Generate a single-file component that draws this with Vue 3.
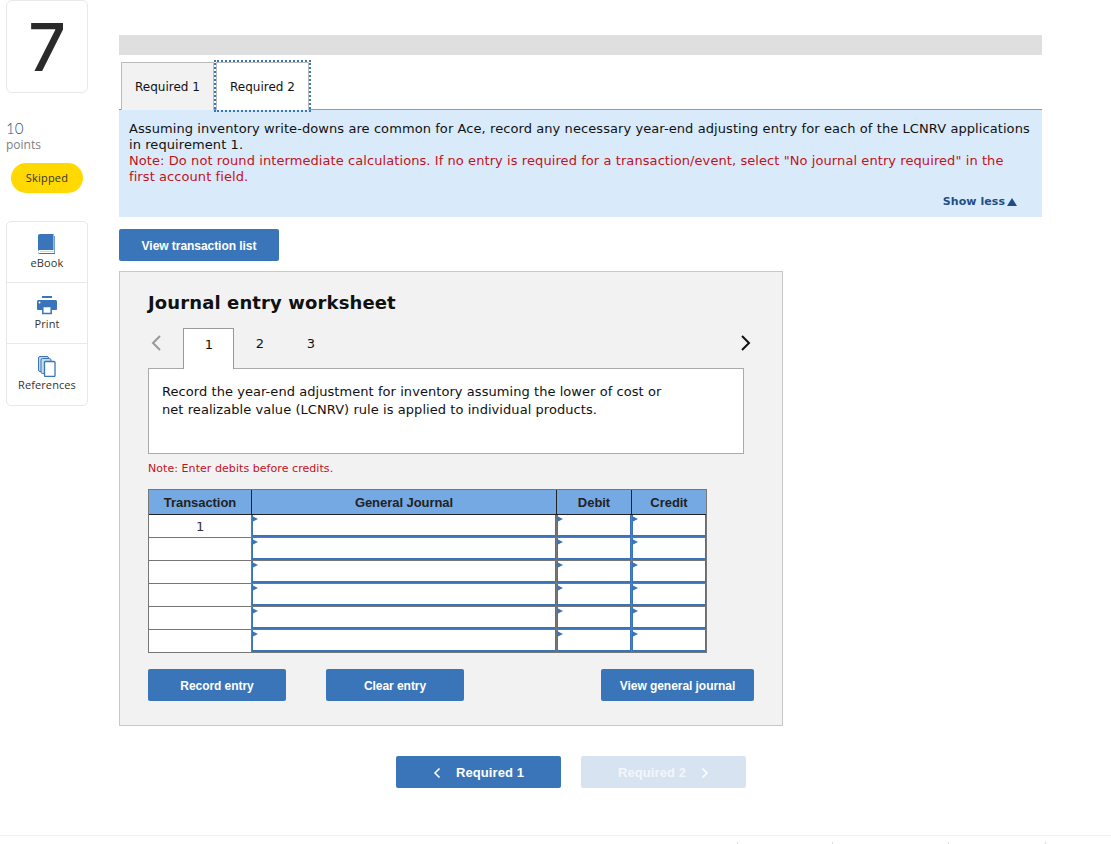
<script setup>
const tools = [
  { name: 'eBook', icon: 'book' },
  { name: 'Print', icon: 'print' },
  { name: 'References', icon: 'refs' }
]
const rows = [1, '', '', '', '', '']
const ticks = [737, 832, 948, 1045]
</script>

<template>
  <div class="page">
    <aside class="side">
      <div class="qnum">7</div>
      <div class="pts">10</div>
      <div class="pts-label">points</div>
      <div class="pill">Skipped</div>
      <div class="tools">
        <div v-for="t in tools" :key="t.name" class="tool">
          <svg class="tool-icon" width="24" height="24" viewBox="0 0 24 24">
            <template v-if="t.icon === 'book'">
              <path d="M3 5C3 3.800 3.800 3 5 3H18.500V19H5C3.800 19 3 19.700 3 20.500Z" fill="#3a75b9"/>
              <path d="M19.300 5H20V23H5C3.800 23 3 22 3 21C3.300 21.800 4 22 5 22H19.300Z" fill="#3a75b9"/>
              <path d="M5 20.500H18.500" stroke="#c6d8ec" stroke-width="1"/>
            </template>
            <template v-else-if="t.icon === 'print'">
              <rect x="7" y="4" width="10" height="2" fill="#3a75b9"/>
              <path d="M2 9.500C2 8.700 2.700 8 3.500 8H20.500C21.300 8 22 8.700 22 9.500V17C22 17.500 21.500 18 21 18H3C2.500 18 2 17.500 2 17Z" fill="#3a75b9"/>
              <rect x="7.800" y="14.500" width="8.400" height="7" fill="#fff" stroke="#3a75b9" stroke-width="1.500"/>
              <circle cx="4.500" cy="10.500" r="1" fill="#fff"/>
            </template>
            <template v-else>
              <rect x="3.500" y="3.500" width="10" height="15" rx="1.500" fill="#c6d8ec" stroke="#3a75b9"/>
              <rect x="6" y="5.500" width="10" height="15" rx="1.500" fill="#c6d8ec" stroke="#3a75b9"/>
              <rect x="9.500" y="8.500" width="10.500" height="15" rx="1" fill="#fff" stroke="#3a75b9" stroke-width="1.300"/>
            </template>
          </svg>
          <span>{{ t.name }}</span>
        </div>
      </div>
    </aside>

    <main class="main">
      <div class="graybar"></div>
      <div class="tabs">
        <div class="tab">Required 1</div>
        <div class="tab active">Required 2</div>
      </div>
      <div class="info">
        <p>Assuming inventory write-downs are common for Ace, record any necessary year-end adjusting entry for each of the LCNRV applications in requirement 1.</p>
        <p class="red">Note: Do not round intermediate calculations. If no entry is required for a transaction/event, select "No journal entry required" in the first account field.</p>
        <div class="show-less">Show less<span class="tri"></span></div>
      </div>
      <button class="btn list-btn">View transaction list</button>

      <section class="sheet">
        <h2>Journal entry worksheet</h2>
        <div class="steps">
          <svg class="chev" width="12" height="18" viewBox="0 0 12 18"><path d="M10 2L3 9L10 16" fill="none" stroke="#999" stroke-width="2"/></svg>
          <div class="step current">1</div>
          <div class="step">2</div>
          <div class="step">3</div>
          <svg class="chev next" width="12" height="18" viewBox="0 0 12 18"><path d="M2 2L9 9L2 16" fill="none" stroke="#111" stroke-width="2"/></svg>
        </div>
        <div class="prompt">Record the year-end adjustment for inventory assuming the lower of cost or net realizable value (LCNRV) rule is applied to individual products.</div>
        <div class="note">Note: Enter debits before credits.</div>

        <table class="journal">
          <thead>
            <tr>
              <th class="c-tr">Transaction</th>
              <th class="c-gj">General Journal</th>
              <th class="c-dr">Debit</th>
              <th class="c-cr">Credit</th>
            </tr>
          </thead>
          <tbody>
            <tr v-for="(r, i) in rows" :key="i">
              <td class="num">{{ r }}</td>
              <td class="cell"><i></i></td>
              <td class="cell"><i></i></td>
              <td class="cell"><i></i></td>
            </tr>
          </tbody>
        </table>

        <div class="actions">
          <button class="btn act">Record entry</button>
          <button class="btn act clear">Clear entry</button>
          <button class="btn act journal-btn">View general journal</button>
        </div>
      </section>

      <div class="nav">
        <button class="btn nav-btn">
          <svg width="8" height="12" viewBox="0 0 8 12"><path d="M6.500 1.500L2 6L6.500 10.500" fill="none" stroke="#fff" stroke-width="1.600"/></svg>
          Required 1
        </button>
        <button class="btn nav-btn off">
          Required 2
          <svg width="8" height="12" viewBox="0 0 8 12"><path d="M1.500 1.500L6 6L1.500 10.500" fill="none" stroke="#fff" stroke-width="1.600"/></svg>
        </button>
      </div>
    </main>

    <footer class="foot">
      <span v-for="x in ticks" :key="x" class="tick" :style="{ left: x + 'px' }"></span>
    </footer>
  </div>
</template>

<style>
html, body {
  margin: 0;
  background: #fff;
}
</style>

<style scoped>
.page {
  position: relative;
  display: flex;
  width: 1111px;
  height: 844px;
  overflow: hidden;
  font-family: "DejaVu Sans", Verdana, sans-serif;
  color: #111;
  box-sizing: border-box;
}

.side {
  width: 82px;
  margin-left: 6px;
  font-family: "Open Sans", "Liberation Sans", sans-serif;
}

.qnum {
  height: 93px;
  box-sizing: border-box;
  border: 1px solid #e8e8e8;
  border-radius: 6px;
  text-align: center;
  font-family: Inter, "Open Sans", sans-serif;
  font-size: 66px;
  font-weight: 500;
  line-height: 92px;
  color: #2a2a2a;
}

.pts {
  margin-top: 27px;
  font-family: Lato, "Open Sans", sans-serif;
  font-size: 15px;
  font-weight: 300;
  line-height: 16px;
  color: #1f4e87;
}

.pts-label {
  font-size: 12px;
  line-height: 17px;
  color: #808080;
}

.pill {
  width: 72px;
  height: 30px;
  margin: 10px 0 0 5px;
  border-radius: 15px;
  background: #ffd900;
  text-align: center;
  font-size: 11px;
  letter-spacing: 0.2px;
  line-height: 30px;
  color: #333;
}

.tools {
  margin-top: 28px;
  border: 1px solid #e8e8e8;
  border-radius: 5px;
}

.tool {
  height: 61px;
  display: flex;
  flex-direction: column;
  align-items: center;
  padding-top: 9px;
  box-sizing: border-box;
  font-size: 11px;
  letter-spacing: 0.1px;
  line-height: 14px;
  color: #333;
  border-bottom: 1px solid #e8e8e8;
}

.tool:last-child {
  border-bottom: 0;
}

.tool-icon {
  margin-bottom: 1px;
}

.main {
  width: 923px;
  margin-left: 31px;
  padding-top: 35px;
  letter-spacing: 0.06px;
}

.graybar {
  height: 20px;
  background: #dfdfdf;
}

.tabs {
  display: flex;
  gap: 2px;
  height: 55px;
  padding: 7px 0 0 2px;
  box-sizing: border-box;
  border-bottom: 1px solid #999;
}

.tab {
  width: 91px;
  height: 47px;
  border: 1px solid #bbb;
  border-bottom: 0;
  background: #f2f2f2;
  text-align: center;
  font-size: 12px;
  letter-spacing: 0;
  line-height: 48px;
}

.tab.active {
  background: #fff;
  outline: 2px dotted #3a75b9;
}

.info {
  height: 107px;
  padding: 11px 10px 0 10px;
  box-sizing: border-box;
  background: #d9ebfa;
  font-size: 13px;
  letter-spacing: 0.08px;
  line-height: 16px;
  color: #111;
}

.info p {
  margin: 0;
}

.red {
  color: #c4111b;
}

.show-less {
  margin-top: 9px;
  padding-right: 15px;
  display: flex;
  justify-content: flex-end;
  align-items: center;
  gap: 2px;
  font-size: 11px;
  letter-spacing: 0.06px;
  font-weight: 700;
  color: #1f4e87;
}

.tri {
  width: 0;
  height: 0;
  border-left: 5px solid transparent;
  border-right: 5px solid transparent;
  border-bottom: 8px solid #1f4e87;
}

.btn {
  border: 0;
  border-radius: 2px;
  background: #3a75b9;
  color: #fff;
  font-family: "Liberation Sans", Arial, sans-serif;
  font-weight: 700;
  font-size: 12px;
  letter-spacing: -0.05px;
  height: 32px;
  padding: 1px 0 0;
}

.list-btn {
  display: block;
  width: 160px;
  margin-top: 12px;
}

.sheet {
  width: 664px;
  height: 455px;
  margin-top: 10px;
  padding: 20px 28px 0;
  box-sizing: border-box;
  background: #f2f2f2;
  border: 1px solid #c8c8c8;
}

.sheet h2 {
  margin: 0;
  font-size: 18px;
  letter-spacing: 0.12px;
  line-height: 22px;
  font-weight: 700;
  color: #111;
}

.steps {
  display: flex;
  align-items: flex-start;
  height: 41px;
  margin-top: 14px;
  position: relative;
  z-index: 1;
}

.chev {
  margin-top: 6px;
  margin-left: 2px;
  width: 12px;
  flex: none;
}

.chev.next {
  margin-left: auto;
  margin-right: 2px;
}

.step {
  width: 51px;
  height: 40px;
  padding-left: 1px;
  box-sizing: border-box;
  text-align: center;
  font-size: 13px;
  line-height: 32px;
}

.step.current {
  margin-left: 21px;
  height: 41px;
  border: 1px solid #999;
  border-bottom: 0;
  background: #fff;
}

.prompt {
  width: 596px;
  height: 86px;
  margin-top: -1px;
  padding: 14px 70px 0 13px;
  box-sizing: border-box;
  border: 1px solid #aaa;
  background: #fff;
  font-size: 13px;
  line-height: 18px;
}

.note {
  margin-top: 8px;
  font-size: 11px;
  line-height: 14px;
  color: #c4111b;
}

.journal {
  margin-top: 13px;
  width: 559px;
  table-layout: fixed;
  border-collapse: separate;
  border-spacing: 0;
  border: 1px solid #777;
  font-family: "Liberation Sans", Arial, sans-serif;
  letter-spacing: -0.05px;
  background: #fff;
}

.journal th {
  height: 25px;
  padding: 0;
  box-sizing: border-box;
  background: #75a9e4;
  border-left: 1px solid #222;
  border-bottom: 1px solid #222;
  font-size: 13px;
  color: #222;
}

.journal th:first-child {
  border-left: 0;
}

.c-tr { width: 102px; }
.c-gj { width: 305px; }
.c-dr { width: 75px; }
.c-cr { width: 75px; }

.journal td {
  height: 23px;
  padding: 0;
  box-sizing: border-box;
  position: relative;
  border-bottom: 1px solid #777;
}

.journal tr:last-child td {
  height: 22px;
  border-bottom: 0;
}

.num {
  text-align: center;
  font-size: 13px;
  color: #333;
  font-family: "DejaVu Sans", sans-serif;
}

.cell {
  border-left: 1px solid #777;
  box-shadow: inset 1px 0 0 #3a75b9, inset 0 -2px 0 #3a75b9, inset -1px 0 0 #3a75b9;
}

.cell i {
  position: absolute;
  left: 0;
  top: 1px;
  width: 0;
  height: 0;
  border-top: 3px solid transparent;
  border-bottom: 3px solid transparent;
  border-left: 6px solid #3a75b9;
}

.actions {
  display: flex;
  margin-top: 16px;
}

.act {
  width: 138px;
}

.clear {
  margin-left: 40px;
}

.journal-btn {
  width: 153px;
  margin-left: auto;
}

.nav {
  display: flex;
  gap: 20px;
  margin: 30px 0 0 277px;
}

.nav-btn {
  width: 165px;
  font-size: 13px;
  letter-spacing: 0.1px;
  display: flex;
  align-items: center;
  justify-content: center;
  gap: 15px;
}

.nav-btn.off {
  background: #d8e3f1;
  color: #f2f6fb;
}

.foot {
  position: absolute;
  left: 0;
  right: 0;
  top: 835px;
  height: 9px;
  border-top: 1px solid #f0f0f0;
}

.tick {
  position: absolute;
  top: 6px;
  width: 1px;
  height: 3px;
  background: #ddd;
}
</style>
